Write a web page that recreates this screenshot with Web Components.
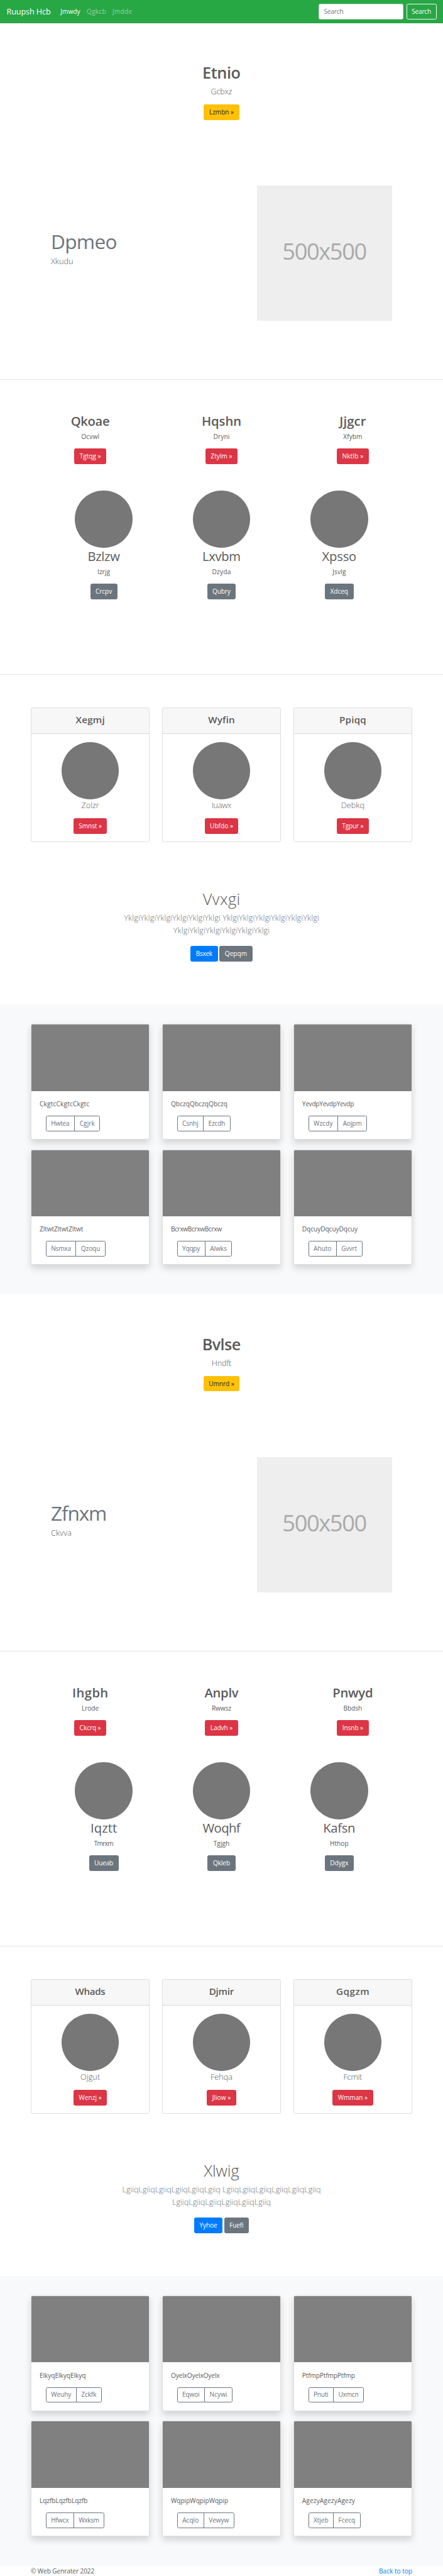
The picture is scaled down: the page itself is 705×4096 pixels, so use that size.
<!DOCTYPE html>
<html lang="en">
<head>
<meta charset="utf-8">
<title>Ruupsh Hcb</title>
<style>
  /* 1rem = 100 design pixels on a 1080-wide layout */
  html { font-size: 65.2778px; }
  body { margin: 0; background: #fff; color: #5a5a5a; font-family: "Open Sans", "Noto Sans", sans-serif; }
</style>
</head>
<body>
<site-nav></site-nav>
<main id="main"></main>
<site-footer></site-footer>

<script>
const UNIT = 65.2778 / 100;

function define(name, html, setup) {
  const template = document.createElement('template');
  template.innerHTML = html;
  customElements.define(name, class extends HTMLElement {
    constructor() {
      super();
      this.attachShadow({ mode: 'open' }).append(template.content.cloneNode(true));
    }
    connectedCallback() { if (setup) setup(this); }
  });
}

/* ---- page content ---- */
const halves = [
  {
    hero: [['Etnio', 88.5], ['Gcbxz', 50], ['Lzmbn »', 86]],
    feature: [['Dpmeo', 155], ['Xkudu', 53]],
    heads: [
      [['Qkoae', 92], ['Ocvwl', 42], ['Tgtqg »', 78]],
      [['Hqshn', 91.6], ['Dryni', 37], ['Ztylm »', 78.5]],
      [['Jjgcr', 67], ['Xfybm', 45], ['Nktlb »', 78]]],
    circles: [
      [['Bzlzw', 75.8], ['Izrjg', 29.6], ['Crcpv', 66]],
      [['Lxvbm', 88], ['Dzyda', 43.4], ['Qubry', 70]],
      [['Xpsso', 82.6], ['Jsvlg', 33.7], ['Xdceq', 69.5]]],
    cards: [
      [['Xegmj', 69], ['Zolzr', 42.7], ['Smnst »', 82]],
      [['Wyfin', 63.4], ['Iuawx', 46], ['Ubfdo »', 82.5]],
      [['Ppiqq', 62], ['Debkq', 53.7], ['Tgpur »', 78]]],
    intro: [['Vvxgi', 88], ['YklgiYklgiYklgiYklgiYklgiYklgi YklgiYklgiYklgiYklgiYklgiYklgi', 474.5], ['YklgiYklgiYklgiYklgiYklgiYklgi', 233.5], ['Bsxek', 66], ['Qepqm', 80]],
    album: [
      [['CkgtcCkgtcCkgtc', 120], ['Hwtea', 71], ['Cgjrk', 63]],
      [['QbczqQbczqQbczq', 136], ['Csnhj', 65], ['Ezcdh', 67]],
      [['YevdpYevdpYevdp', 126], ['Wzcdy', 73], ['Aojpm', 72]],
      [['ZltwtZltwtZltwt', 105.5], ['Nsmxa', 74.5], ['Qzoqu', 72.5]],
      [['BcrxwBcrxwBcrxw', 123], ['Yqqpy', 69], ['Alwks', 67]],
      [['DqcuyDqcuyDqcuy', 134], ['Ahuto', 69.3], ['Gvvrt', 64]]]
  },
  {
    hero: [['Bvlse', 89], ['Hndft', 46], ['Umnrd »', 88]],
    feature: [['Zfnxm', 132], ['Ckvva', 48]],
    heads: [
      [['Ihgbh', 82.6], ['Lrode', 39.3], ['Ckcrq »', 78]],
      [['Anplv', 83.3], ['Rwwsz', 45.5], ['Ladvh »', 80]],
      [['Pnwyd', 93.7], ['Bbdsh', 42.7], ['Insnb »', 77]]],
    circles: [
      [['Iqztt', 61.3], ['Tmrxm', 46], ['Uueab', 72]],
      [['Woqhf', 93.7], ['Tgjgh', 38], ['Qkleb', 67.5]],
      [['Kafsn', 73.7], ['Hthop', 43.4], ['Ddygx', 71]]],
    cards: [
      [['Whads', 73], ['Ojgut', 46], ['Wenzj »', 82]],
      [['Djmir', 58.5], ['Fehqa', 50], ['Jliow »', 71.6]],
      [['Gqgzm', 77.8], ['Fcmit', 43.4], ['Wmman »', 98.5]]],
    intro: [['Xlwig', 86], ['LgiiqLgiiqLgiiqLgiiqLgiiqLgiiq LgiiqLgiiqLgiiqLgiiqLgiiqLgiiq', 480.7], ['LgiiqLgiiqLgiiqLgiiqLgiiqLgiiq', 237], ['Yyhoe', 69], ['Fuefi', 60]],
    album: [
      [['ElkyqElkyqElkyq', 110], ['Weuhy', 75], ['Zckfk', 63]],
      [['OyelxOyelxOyelx', 118], ['Eqwoi', 68], ['Ncywi', 69]],
      [['PtfmpPtfmpPtfmp', 126.7], ['Pnuti', 62], ['Uxmcn', 75]],
      [['LqzfbLqzfbLqzfb', 115], ['Hfwcx', 69], ['Wxksm', 76]],
      [['WqpipWqpipWqpip', 139], ['Acqlo', 66], ['Vewyw', 75]],
      [['AgezyAgezyAgezy', 129], ['Xtjeb', 62], ['Fcecq', 67]]]
  }
];

const text = ([label, ink], slot) => `<fit-text${slot ? ` slot="${slot}"` : ''} ink="${ink}">${label}</fit-text>`;
const button = ([label, width], kind, slot) => `<ui-button${slot ? ` slot="${slot}"` : ''} kind="${kind}" width="${width}">${label}</ui-button>`;
const trio = (tag, kind) => ([title, note, action]) =>
  `<${tag}>${text(title, 'title')}${text(note, 'note')}${button(action, kind)}</${tag}>`;

document.getElementById('main').innerHTML = halves.map(h => `
  <hero-block>${text(h.hero[0], 'title')}${text(h.hero[1], 'note')}${button(h.hero[2], 'warning')}</hero-block>
  <feature-row>${text(h.feature[0], 'title')}${text(h.feature[1], 'note')}</feature-row>
  <column-row kind="heads">${h.heads.map(trio('head-column', 'danger')).join('')}</column-row>
  <column-row kind="circles">${h.circles.map(trio('circle-column', 'secondary')).join('')}</column-row>
  <column-row kind="cards">${h.cards.map(trio('price-card', 'danger')).join('')}</column-row>
  <intro-block>${text(h.intro[0], 'title')}${text(h.intro[1], 'line1')}${text(h.intro[2], 'line2')}${button(h.intro[3], 'primary')}${button(h.intro[4], 'secondary')}</intro-block>
  <photo-album>${h.album.map(([t, a, b]) => `<photo-card>${text(t, 'title')}${button(a, 'outline first')}${button(b, 'outline last')}</photo-card>`).join('')}</photo-album>
`).join('');

/* ---- components ---- */
define('site-nav', `
<style>
  :host { display: flex; align-items: center; height: .56rem; padding: 0 .16rem; box-sizing: border-box; background: #28a745; color: #fff; font-size: .16rem; line-height: .24rem; }
  .brand { font-size: .2rem; line-height: .3rem; margin-right: .16rem; }
  a { padding: 0 .08rem; color: rgba(255,255,255,.5); }
  a.active { color: #fff; }
  .field { margin-left: auto; margin-right: .08rem; width: 2.07rem; height: .38rem; box-sizing: border-box; padding: .06rem .12rem; background: #fff; border: 1px solid #ced4da; border-radius: .04rem; color: #6c757d; }
</style>
<span class="brand"><fit-text adv="107.5">Ruupsh Hcb</fit-text></span>
<a class="active"><fit-text adv="48">Jmwdy</fit-text></a>
<a><fit-text adv="47">Qgkcb</fit-text></a>
<a><fit-text adv="48">Jmdde</fit-text></a>
<div class="field"><fit-text ink="46">Search</fit-text></div>
<ui-button kind="light" width="73">Search</ui-button>`);

define('hero-block', `
<style>
  :host { display: block; height: 3.96rem; padding-top: .96rem; box-sizing: border-box; text-align: center; }
  h1 { margin: 0 0 .08rem; font-size: .4rem; font-weight: 600; line-height: .48rem; }
  p { margin: 0 0 .16rem; font-size: .2rem; font-weight: 300; line-height: .3rem; }
  .action { display: flex; justify-content: center; }
</style>
<h1><slot name="title"></slot></h1><p><slot name="note"></slot></p><div class="action"><slot></slot></div>`);

define('feature-row', `
<style>
  :host { display: flex; justify-content: space-between; align-items: flex-start; height: 4.74rem; padding: 0 1.237rem 0 1.24rem; box-sizing: border-box; border-bottom: 1px solid rgba(0,0,0,.1); }
  .copy { padding-top: 1.11rem; }
  h2 { margin: 0 0 .08rem; font-size: .5rem; font-weight: 400; line-height: .5rem; color: #6c757d; }
  p { margin: 0; font-size: .2rem; font-weight: 300; line-height: .3rem; }
  .image { display: flex; align-items: center; justify-content: center; width: 3.293rem; height: 3.293rem; background: #eee; color: #aaa; font-size: .573rem; line-height: 1; box-sizing: border-box; padding-bottom: .1rem; }
</style>
<div class="copy"><h2><slot name="title"></slot></h2><p><slot name="note"></slot></p></div>
<div class="image"><fit-text ink="201">500x500</fit-text></div>`);

define('column-row', `
<style>
  :host { display: grid; justify-content: center; box-sizing: border-box; }
  :host([kind="heads"]) { grid-template-columns: repeat(3, 3.2rem); padding-top: .804rem; height: 2.69rem; }
  :host([kind="circles"]) { grid-template-columns: repeat(3, 2.87rem); height: 4.49rem; border-bottom: 1px solid rgba(0,0,0,.1); }
  :host([kind="cards"]) { grid-template-columns: repeat(3, 2.9rem); gap: .3rem; padding-top: .8rem; height: 4.078rem; }
</style><slot></slot>`);

const columnStyle = `
  :host { display: flex; flex-direction: column; align-items: center; }
  h2 { margin: 0 0 .08rem; font-size: .32rem; font-weight: 400; line-height: .384rem; }
  p { margin: 0 0 .16rem; font-size: .16rem; line-height: .24rem; }
  .disc { width: 1.4rem; height: 1.4rem; border-radius: 50%; background: #777; flex: none; }`;

define('head-column', `<style>${columnStyle} h2 { font-weight: 600; }</style>
<h2><slot name="title"></slot></h2><p><slot name="note"></slot></p><slot></slot>`);

define('circle-column', `<style>${columnStyle}</style>
<div class="disc"></div><h2><slot name="title"></slot></h2><p><slot name="note"></slot></p><slot></slot>`);

define('price-card', `
<style>${columnStyle}
  :host { align-items: stretch; box-sizing: border-box; height: 3.278rem; border: 1px solid rgba(0,0,0,.125); border-radius: .04rem; text-align: center; }
  header { box-sizing: border-box; height: .618rem; padding-top: .12rem; background: rgba(0,0,0,.03); border-bottom: 1px solid rgba(0,0,0,.125); font-size: .24rem; font-weight: 600; line-height: .288rem; }
  .body { display: flex; flex-direction: column; align-items: center; padding-top: .2rem; }
  p { font-size: .2rem; font-weight: 300; line-height: .3rem; }
</style>
<header><slot name="title"></slot></header>
<div class="body"><div class="disc"></div><p><slot name="note"></slot></p><slot></slot></div>`);

define('intro-block', `
<style>
  :host { display: block; box-sizing: border-box; height: 3.942rem; padding-top: 1.132rem; text-align: center; font-weight: 300; }
  h1 { margin: 0 0 .08rem; font-size: .4rem; font-weight: 300; line-height: .48rem; }
  p { margin: 0 0 .235rem; font-size: .2rem; line-height: .3rem; color: #6c757d; }
  p span { display: block; height: .3rem; }
  .actions { display: flex; justify-content: center; gap: .043rem; }
</style>
<h1><slot name="title"></slot></h1>
<p><span><slot name="line1"></slot></span><span><slot name="line2"></slot></span></p>
<div class="actions"><slot></slot></div>`);

define('photo-album', `
<style>
  :host { display: grid; box-sizing: border-box; height: 7.075rem; grid-template-columns: repeat(3, 2.9rem); grid-auto-rows: 2.8175rem; column-gap: .3rem; row-gap: .24rem; justify-content: center; padding-top: .48rem; background: #f8f9fa; }
</style><slot></slot>`);

define('photo-card', `
<style>
  :host { display: block; box-sizing: border-box; background: #fff; background-clip: border-box; border: 1px solid rgba(0,0,0,.125); border-radius: .04rem; box-shadow: 0 .08rem .16rem rgba(0,0,0,.15); overflow: hidden; }
  .photo { height: 1.6175rem; background: gray; }
  p { margin: .2rem .2rem .16rem; font-size: .16rem; line-height: .24rem; }
  .group { display: flex; margin-left: .35rem; }
</style>
<div class="photo"></div><p><slot name="title"></slot></p><div class="group"><slot></slot></div>`);

define('site-footer', `
<style>
  :host { display: flex; justify-content: space-between; height: .24rem; padding: 0 .75rem; font-size: .16rem; line-height: .24rem; }
  a { color: #007bff; }
</style>
<span><fit-text ink="154">© Web Genrater 2022</fit-text></span><a><fit-text ink="79">Back to top</fit-text></a>`);

/* Button: a fixed outer width, its label fitted between .12rem paddings. */
define('ui-button', `
<style>
  :host { display: flex; align-items: center; justify-content: center; box-sizing: border-box; height: .38rem; flex: none; border: 1px solid var(--edge, transparent); border-radius: .04rem; background: var(--fill, transparent); background-clip: border-box; color: var(--ink, #fff); font-size: .16rem; font-weight: 400; line-height: .24rem; }
  :host([kind="warning"]) { --fill: #ffc107; --edge: #ffc107; --ink: #212529; }
  :host([kind="danger"]) { --fill: #dc3545; --edge: #dc3545; }
  :host([kind="primary"]) { --fill: #007bff; --edge: #007bff; }
  :host([kind="secondary"]) { --fill: #6c757d; --edge: #6c757d; }
  :host([kind="light"]) { --edge: #f8f9fa; }
  :host([kind~="outline"]) { --edge: #6c757d; --ink: #6c757d; }
  :host([kind~="first"]) { border-radius: .04rem 0 0 .04rem; }
  :host([kind~="last"]) { border-radius: 0 .04rem .04rem 0; margin-left: -1px; }
</style><span class="label"></span>`, el => {
  const width = parseFloat(el.getAttribute('width'));
  el.style.width = width / 100 + 'rem';
  const label = document.createElement('fit-text');
  label.setAttribute('adv', width - 26);
  label.textContent = el.textContent;
  el.shadowRoot.querySelector('.label').replaceChildren(label);
});

/* Text tracked to a given width: "ink" is the visible extent, "adv" the advance. */
const pen = document.createElement('canvas').getContext('2d');
define('fit-text', `<style>
  :host { display: inline-block; font-size: .97em; line-height: 1; white-space: nowrap; vertical-align: -.026em; }
</style><slot></slot>`, el => {
  const style = getComputedStyle(el);
  const size = parseFloat(style.fontSize) / UNIT;
  const label = el.textContent;
  pen.font = `${style.fontWeight} 100px ${style.fontFamily}`;
  const m = pen.measureText(label);
  let track;
  if (el.hasAttribute('ink')) {
    const natural = (m.actualBoundingBoxRight + m.actualBoundingBoxLeft) / 100;
    track = (parseFloat(el.getAttribute('ink')) / size - natural) / (label.length - 1);
  } else {
    track = (parseFloat(el.getAttribute('adv')) / size - m.width / 100) / label.length;
  }
  el.style.letterSpacing = track.toFixed(4) + 'em';
  el.style.marginRight = (-track).toFixed(4) + 'em';
});
</script>
</body>
</html>
